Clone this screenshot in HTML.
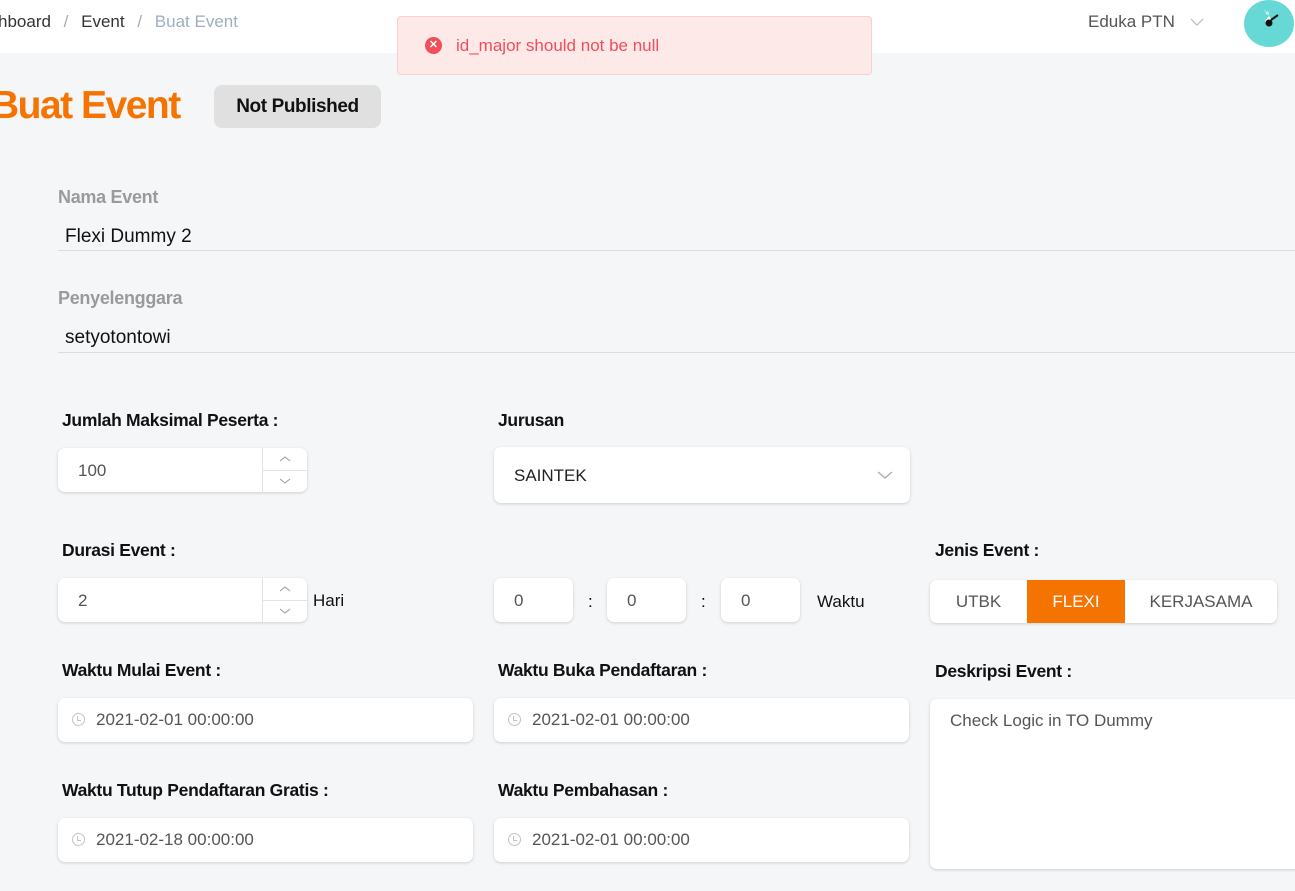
<!DOCTYPE html>
<html><head><meta charset="utf-8"><style>
*{box-sizing:border-box;margin:0;padding:0}
body{width:1295px;height:891px;overflow:hidden;background:#f5f6f8;font-family:"Liberation Sans",sans-serif;position:relative}
.a{position:absolute}
.hdr{left:0;top:0;width:1295px;height:53px;background:#fff}
.lbl{font-size:17.5px;color:#111;font-weight:bold;letter-spacing:-.3px}
.box{background:#fff;border-radius:7px;box-shadow:0 1px 3px rgba(0,0,0,.16)}
.val{font-size:17px;color:#555}
.glab{font-size:18px;color:#9a9a9a;font-weight:bold;letter-spacing:-.3px}
.line{height:1px;background:#dcdcdc}
.clock{display:inline-block;width:13px;height:13px;border:1.5px solid #c4c4c4;border-radius:50%;position:relative;vertical-align:-1px;margin-right:11px}
.clock:after{content:"";position:absolute;left:4px;top:2px;width:3px;height:4px;border-left:1.5px solid #c4c4c4;border-bottom:1.5px solid #c4c4c4}
.date{font-size:17px;color:#555;padding:12px 0 0 14px}
</style></head><body>
<div class="a hdr"></div>
<div class="a" style="left:-2px;top:12px;font-size:17px;color:#333">hboard <span style="color:#aaa;margin:0 8px">/</span> Event <span style="color:#aaa;margin:0 8px">/</span> <span style="color:#a0aec0">Buat Event</span></div>
<div class="a" style="left:1088px;top:12px;font-size:17px;color:#555">Eduka PTN</div>
<svg class="a" style="left:1190px;top:17px" width="14" height="10"><path d="M1 2l6 6 6-6" fill="none" stroke="#bbb" stroke-width="1.2"/></svg>
<div class="a" style="left:1244px;top:0;width:50px;height:47px;border-radius:50%;background:#66d9d6"></div>
<svg class="a" style="left:1256px;top:6px" width="26" height="26"><path d="M8 3l3 6 1-5 1 6-4 5 3 4 4-2-2-6z" fill="#fff"/><circle cx="13" cy="17" r="3.5" fill="#111"/><path d="M15 14l7-5" stroke="#111" stroke-width="2"/></svg>

<div class="a" style="left:397px;top:16px;width:475px;height:59px;background:#fee9e9;border:1px solid #fbcfcf;border-radius:4px"></div>
<div class="a" style="left:425px;top:37px;width:17px;height:17px;border-radius:50%;background:#f04e5a;color:#fff;font-size:11px;font-weight:bold;text-align:center;line-height:17px">✕</div>
<div class="a" style="left:456px;top:36px;font-size:17px;color:#f04e5a">id_major should not be null</div>

<div class="a" style="left:-9px;top:84px;font-size:39px;color:#f57300;font-weight:bold;letter-spacing:-1.5px">Buat Event</div>
<div class="a" style="left:214px;top:85px;width:167px;height:43px;background:#e0e0e0;border-radius:8px;font-size:19px;font-weight:bold;letter-spacing:-.4px;color:#111;text-align:center;line-height:43px">Not Published</div>

<div class="a glab" style="left:58px;top:187px">Nama Event</div>
<div class="a" style="left:65px;top:226px;font-size:19px;color:#111">Flexi Dummy 2</div>
<div class="a line" style="left:58px;top:250px;width:1237px"></div>
<div class="a glab" style="left:58px;top:288px">Penyelenggara</div>
<div class="a" style="left:65px;top:327px;font-size:19px;color:#111">setyotontowi</div>
<div class="a line" style="left:58px;top:352px;width:1237px"></div>

<div class="a lbl" style="left:62px;top:410px">Jumlah Maksimal Peserta :</div>
<div class="a box" style="left:58px;top:448px;width:249px;height:44px"></div>
<div class="a val" style="left:78px;top:461px">100</div>
<div class="a" style="left:262px;top:448px;width:1px;height:44px;background:#e3e3e3"></div>
<div class="a" style="left:262px;top:470px;width:45px;height:1px;background:#e3e3e3"></div>
<svg class="a" style="left:278px;top:455px" width="14" height="8"><path d="M2 6l5-4 5 4" fill="none" stroke="#999"/></svg>
<svg class="a" style="left:278px;top:477px" width="14" height="8"><path d="M2 2l5 4 5-4" fill="none" stroke="#999"/></svg>

<div class="a lbl" style="left:498px;top:410px">Jurusan</div>
<div class="a box" style="left:494px;top:447px;width:416px;height:56px"></div>
<div class="a" style="left:514px;top:466px;font-size:17px;color:#222">SAINTEK</div>
<svg class="a" style="left:877px;top:470px" width="16" height="10"><path d="M1 2l7 6 7-6" fill="none" stroke="#aaa" stroke-width="1.3"/></svg>

<div class="a lbl" style="left:62px;top:540px">Durasi Event :</div>
<div class="a box" style="left:58px;top:578px;width:249px;height:44px"></div>
<div class="a val" style="left:78px;top:591px">2</div>
<div class="a" style="left:262px;top:578px;width:1px;height:44px;background:#e3e3e3"></div>
<div class="a" style="left:262px;top:600px;width:45px;height:1px;background:#e3e3e3"></div>
<svg class="a" style="left:278px;top:585px" width="14" height="8"><path d="M2 6l5-4 5 4" fill="none" stroke="#999"/></svg>
<svg class="a" style="left:278px;top:607px" width="14" height="8"><path d="M2 2l5 4 5-4" fill="none" stroke="#999"/></svg>
<div class="a" style="left:313px;top:591px;font-size:17px;color:#111">Hari</div>

<div class="a box" style="left:494px;top:578px;width:79px;height:44px"></div>
<div class="a val" style="left:514px;top:591px">0</div>
<div class="a" style="left:588px;top:592px;font-size:17px">:</div>
<div class="a box" style="left:607px;top:578px;width:79px;height:44px"></div>
<div class="a val" style="left:627px;top:591px">0</div>
<div class="a" style="left:701px;top:592px;font-size:17px">:</div>
<div class="a box" style="left:721px;top:578px;width:79px;height:44px"></div>
<div class="a val" style="left:741px;top:591px">0</div>
<div class="a" style="left:817px;top:592px;font-size:17px;color:#111">Waktu</div>

<div class="a lbl" style="left:935px;top:540px">Jenis Event :</div>
<div class="a box" style="left:930px;top:580px;width:347px;height:43px;overflow:hidden;font-size:17px;color:#555">
<div class="a" style="left:0;top:0;width:97px;height:43px;text-align:center;line-height:43px">UTBK</div>
<div class="a" style="left:97px;top:0;width:98px;height:43px;background:#f57300;color:#fff;text-align:center;line-height:43px">FLEXI</div>
<div class="a" style="left:195px;top:0;width:152px;height:43px;text-align:center;line-height:43px">KERJASAMA</div>
</div>

<div class="a lbl" style="left:62px;top:660px">Waktu Mulai Event :</div>
<div class="a lbl" style="left:498px;top:660px">Waktu Buka Pendaftaran :</div>
<div class="a lbl" style="left:935px;top:661px">Deskripsi Event :</div>
<div class="a box date" style="left:58px;top:698px;width:415px;height:44px"><span class="clock"></span>2021-02-01 00:00:00</div>
<div class="a box date" style="left:494px;top:698px;width:415px;height:44px"><span class="clock"></span>2021-02-01 00:00:00</div>
<div class="a box" style="left:930px;top:699px;width:380px;height:170px"></div>
<div class="a" style="left:950px;top:711px;font-size:17px;color:#555">Check Logic in TO Dummy</div>

<div class="a lbl" style="left:62px;top:780px">Waktu Tutup Pendaftaran Gratis :</div>
<div class="a lbl" style="left:498px;top:780px">Waktu Pembahasan :</div>
<div class="a box date" style="left:58px;top:818px;width:415px;height:44px"><span class="clock"></span>2021-02-18 00:00:00</div>
<div class="a box date" style="left:494px;top:818px;width:415px;height:44px"><span class="clock"></span>2021-02-01 00:00:00</div>
</body></html>
